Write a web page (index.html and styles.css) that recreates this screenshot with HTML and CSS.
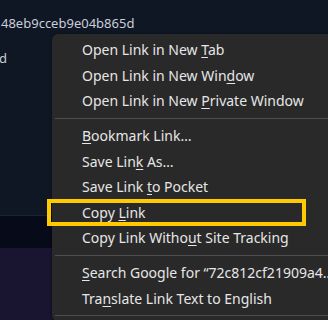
FILE: index.html
```html
<!DOCTYPE html>
<html>
<head>
    <title>Context menu</title>
    <link rel="stylesheet" href="styles.css">
</head>
<body>
    <div class="page">
        <div class="pane top">
            <p class="hash">48eb9cceb9e04b865d</p>
            <p class="hash second">d</p>
        </div>
        <div class="pane middle"></div>
        <div class="pane bottom"></div>
    </div>

    <div class="menu">
        <div class="item">Open Link in New <u>T</u>ab</div>
        <div class="item">Open Link in New Win<u>d</u>ow</div>
        <div class="item">Open Link in New <u>P</u>rivate Window</div>
        <div class="sep"></div>
        <div class="item"><u>B</u>ookmark Link…</div>
        <div class="item">Save Lin<u>k</u> As…</div>
        <div class="item">Save Link <u>t</u>o Pocket</div>
        <div class="item">Copy <u>L</u>ink</div>
        <div class="item">Copy Link Witho<u>u</u>t Site Tracking</div>
        <div class="sep"></div>
        <div class="item"><u>S</u>earch Google for “72c812cf21909a4…</div>
        <div class="item">Tra<u>n</u>slate Link Text to English</div>
        <div class="sep"></div>
    </div>

    <div class="highlight"></div>
</body>
</html>
```

FILE: styles.css
```css
body {
    margin: 0;
    font-family: "Noto Sans", "Open Sans", sans-serif;
    overflow: hidden;
}
.page {
    width: 328px;
    height: 320px;
    display: flex;
    flex-direction: column;
}
.pane.top {
    height: 215px;
    background-color: #0f1725;
    border-bottom: 1px solid #1b2232;
}
.pane.middle {
    height: 32px;
    background-color: #070a19;
}
.pane.bottom {
    flex: 1;
    background-color: #19142f;
}
.hash {
    margin: 0;
    padding-top: 14px;
    font-size: 13px;
    line-height: 18px;
    color: #c9ced8;
    margin-left: 1px;
}
.hash.second {
    padding-top: 17px;
    margin-left: -1px;
}
.menu {
    position: absolute;
    left: 52px;
    top: 34px;
    width: 300px;
    padding-top: 3px;
    background-color: #292929;
    border-radius: 6px;
    box-shadow: 0 0 3px rgba(0, 0, 0, 0.5);
    color: #e6e6e6;
    font-size: 14px;
}
.item {
    height: 25.5px;
    line-height: 25.5px;
    padding-left: 30px;
    white-space: nowrap;
}
.item u {
    text-underline-offset: 2px;
}
.sep {
    height: 1px;
    margin: 4px 0 4.5px 3px;
    background-color: #4f4f4f;
}
.highlight {
    position: absolute;
    left: 47px;
    top: 199px;
    width: 251px;
    height: 19px;
    border: 4px solid #ffcb00;
}
```
